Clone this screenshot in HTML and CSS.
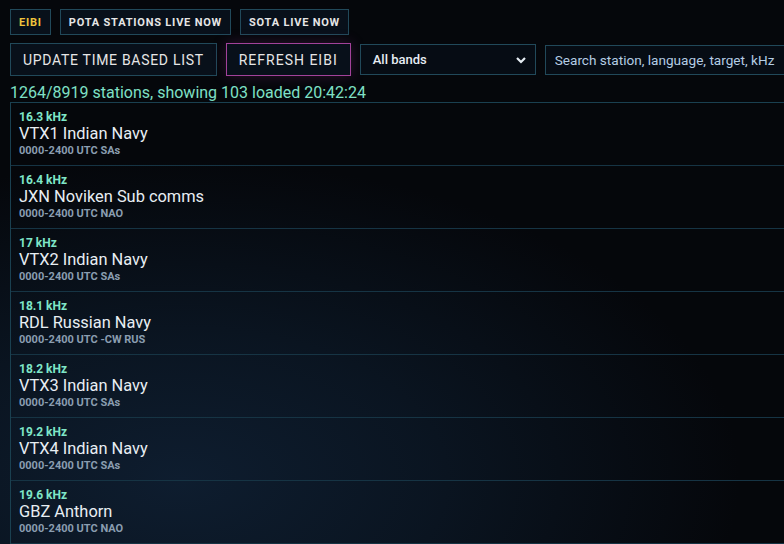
FILE: index.html
```html
<!DOCTYPE html>
<html lang="en">
<head>
  <meta charset="UTF-8" />
  <meta name="viewport" content="width=device-width, initial-scale=1" />
  <title>EiBi stations</title>
  <link rel="stylesheet" href="styles.css">
</head>
<body>
  <div class="tabs">
    <button class="tab active">EIBI</button>
    <button class="tab">POTA STATIONS LIVE NOW</button>
    <button class="tab">SOTA LIVE NOW</button>
  </div>
  <div class="toolbar">
    <button class="btn">UPDATE TIME BASED LIST</button>
    <button class="btn refresh">REFRESH EIBI</button>
    <div class="select">
      <span>All bands</span>
      <svg width="12" height="8" viewBox="0 0 12 8"><path d="M2 2l4 4 4-4" fill="none" stroke="#e6edf3" stroke-width="2.2" /></svg>
    </div>
    <input class="search" type="text" placeholder="Search station, language, target, kHz" />
  </div>
  <div class="status">1264/8919 stations, showing 103 loaded 20:42:24</div>
  <div class="list" id="stationList"></div>
  <script>
    const stations = [
      { khz: '16.3', name: 'VTX1 Indian Navy', info: '0000-2400 UTC SAs' },
      { khz: '16.4', name: 'JXN Noviken Sub comms', info: '0000-2400 UTC NAO' },
      { khz: '17', name: 'VTX2 Indian Navy', info: '0000-2400 UTC SAs' },
      { khz: '18.1', name: 'RDL Russian Navy', info: '0000-2400 UTC -CW RUS' },
      { khz: '18.2', name: 'VTX3 Indian Navy', info: '0000-2400 UTC SAs' },
      { khz: '19.2', name: 'VTX4 Indian Navy', info: '0000-2400 UTC SAs' },
      { khz: '19.6', name: 'GBZ Anthorn', info: '0000-2400 UTC NAO' }
    ];
    const list = document.getElementById('stationList');
    stations.forEach((s) => {
      list.innerHTML += `
        <div class="station">
          <div class="freq">${s.khz} kHz</div>
          <div class="name">${s.name}</div>
          <div class="info">${s.info}</div>
        </div>
      `;
    });
  </script>
</body>
</html>
```

FILE: styles.css
```css
html, body {
  height: 100%;
}
body {
  margin: 0;
  padding: 9px 0 0 10px;
  box-sizing: border-box;
  font-family: Roboto, 'Liberation Sans', sans-serif;
  color: #e6edf3;
  overflow: hidden;
  background:
    radial-gradient(ellipse 560px 320px at 180px 480px, #0e1d2f 0%, rgba(13, 28, 45, 0.65) 45%, rgba(5, 7, 11, 0) 100%),
    #05070b;
}
.tabs {
  display: flex;
  gap: 9px;
  margin-bottom: 8px;
}
.tab {
  height: 26px;
  padding: 0 8px;
  background: #08101a;
  border: 1px solid #21495a;
  color: #e6e6e6;
  font-family: inherit;
  font-size: 11px;
  font-weight: 700;
  letter-spacing: 0.8px;
}
.tab.active {
  color: #f0c43c;
}
.toolbar {
  display: flex;
  gap: 9px;
  align-items: center;
  height: 33px;
  white-space: nowrap;
}
.toolbar > * {
  flex: none;
}
.btn {
  height: 33px;
  padding: 0 12px;
  background: #08101a;
  border: 1px solid #21495a;
  color: #e6e6e6;
  font-family: inherit;
  font-size: 14px;
  letter-spacing: 0.7px;
}
.btn.refresh {
  letter-spacing: 1px;
  border-color: #a2429a;
  box-shadow: 0 0 14px rgba(160, 50, 150, 0.25);
}
.select {
  width: 176px;
  height: 31px;
  box-sizing: border-box;
  display: flex;
  align-items: center;
  justify-content: space-between;
  padding: 0 8px 0 12px;
  background: #060c14;
  border: 1px solid #21495a;
  font-size: 13px;
  font-weight: 500;
}
.search {
  width: 260px;
  height: 30px;
  box-sizing: border-box;
  padding: 0 9px;
  background: #060c14;
  border: 1px solid #21495a;
  color: #e6edf3;
  font-family: inherit;
  font-size: 13.6px;
  outline: none;
}
.search::placeholder {
  color: #b4cde4;
}
.status {
  margin-top: 8px;
  font-size: 16px;
  line-height: 18px;
  color: #7fe0c6;
}
.list {
  width: 800px;
  border-top: 1px solid #1a4050;
  border-left: 1px solid #1a4050;
}
.station {
  padding: 7px 8px;
  border-bottom: 1px solid #163444;
}
.freq {
  font-size: 12px;
  line-height: 14px;
  font-weight: 700;
  color: #7fe6c8;
}
.name {
  font-size: 16.4px;
  line-height: 20px;
  color: #e8eef3;
}
.info {
  font-size: 11px;
  line-height: 14px;
  font-weight: 700;
  color: #8a9db0;
}
```
